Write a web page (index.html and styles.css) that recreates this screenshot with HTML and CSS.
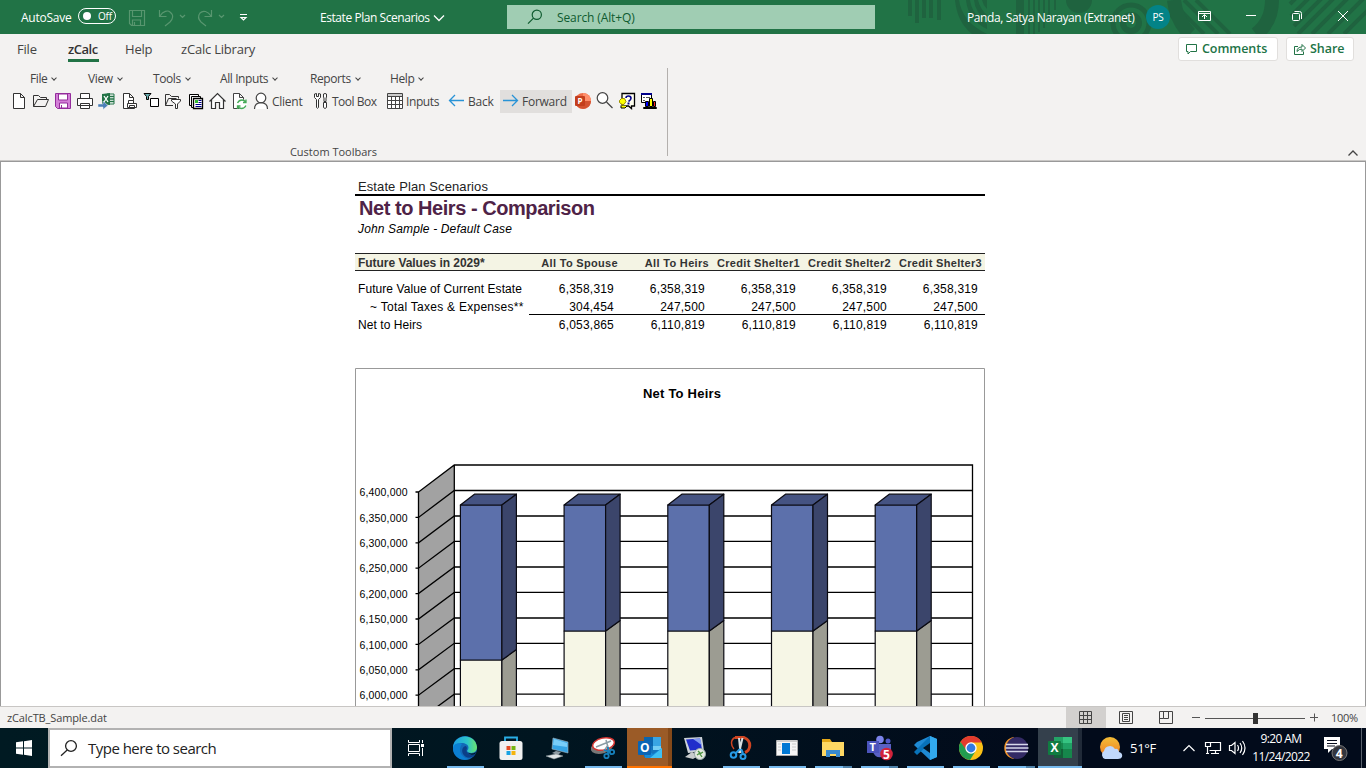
FILE: index.html
```html
<!DOCTYPE html>
<html lang="en">
<head>
<meta charset="utf-8">
<title>Estate Plan Scenarios</title>
<link rel="stylesheet" href="styles.css">
</head>
<body>
<div class="window">
  <header class="titlebar">
    <svg class="pattern" width="466" height="34" viewBox="900 0 466 34" fill="none" stroke="#1f633f">
      <g fill="#1f633f" stroke="none"><path d="M908 0h4v16h-4zM915 0h4v23h-4zM922 0h4v18h-4zM929 0h4v18h-4zM937 0h4v20h-4zM1066 0a12 12 0 0 0 26 0zM1120 23a11 11 0 1 0 22 0a11 11 0 1 0-22 0z"/><path d="M955 0h4q3 22 28 34h-15q-15-12-17-34zM966 0h4q2 15 17 24v5q-19-9-21-29zM974 0h4q2 9 9 15v5q-12-7-13-20zM982 0h5v9q-4-4-5-9zM1016 0h8v34h-8zM1028 0h2v34h-2zM1033 0h2v34h-2zM1038 0h2v32h-2zM1043 0h2v28h-2zM1048 0h2v20h-2zM1054 0h2v10h-2z"/></g>
      <circle cx="1131" cy="23" r="18" stroke-width="5"/><circle cx="1131" cy="23" r="5" fill="#217346" stroke="none"/>
      <path d="M1174 4l30 30M1184 0l34 34M1196 0l34 34M1170 14l20 20" stroke-width="4"/>
      <path d="M1174 0q2 20 16 34M1272 0q0 22-16 34" stroke-width="14"/>
      <path d="M1290 4l8-8M1291 16l20-20M1294 26l30-30M1298 34l36-36M1312 34l36-36M1328 34l36-36M1344 34l26-26" stroke-width="4"/>
    </svg>
    <span class="autosave">AutoSave</span>
    <span class="toggle"><i></i><b>Off</b></span>
    <svg class="quick" width="124" height="20" viewBox="128 7 124 20" fill="none" stroke="#58966f" stroke-width="1.2">
      <path d="M129.500 10.500h15v15h-13l-2-2zM132.500 10.500v6h9v-6M132.500 25v-5h8v5M134.500 22v3M159.500 10v6.500h7M160 16c3-5 8-6 10-4c4 3 3 7 0 10l-5 4M180 15l2.500 2.500 2.500-2.500M211.500 10v6.500h-7M211 16c-3-5-8-6-11-3c-3 4-1 7 1 9l5 4M219 15l2.500 2.500 2.500-2.500"/>
      <path d="M240 14.500h7M241 17.500l2.500 2.500 2.500-2.500z" stroke="#fff"/>
    </svg>
    <span class="doc">Estate Plan Scenarios</span>
    <svg class="doc-arrow" width="12" height="8" viewBox="0 0 12 8" fill="none" stroke="#fff" stroke-width="1.300"><path d="M1 1.500l5 5 5-5"/></svg>
    <div class="search">
      <svg width="16" height="16" viewBox="0 0 16 16" fill="none" stroke="#0f5b30" stroke-width="1.200"><circle cx="9.800" cy="5.800" r="4.600"/><path d="M6.500 9.200L1 14.700"/></svg>
      <span>Search (Alt+Q)</span>
    </div>
    <span class="user">Panda, Satya Narayan (Extranet)</span>
    <span class="avatar">PS</span>
    <svg class="winbtns" width="168" height="24" viewBox="1190 5 168 24" fill="none" stroke="#fff">
      <path d="M1198.500 11.500h12v9h-12zM1198.500 13.500h12M1204.500 19v-4M1202 17l2.500-2.500 2.500 2.500M1246 15.500h10M1294.500 11.500h5q2 0 2 2v5.500M1338 11l10 10M1348 11l-10 10"/><rect x="1292.500" y="13.500" width="7" height="7" rx="1"/>
    </svg>
  </header>

  <section class="ribbon">
    <nav class="tabs">
      <span class="t-file">File</span><span class="t-zcalc">zCalc</span><span class="t-help">Help</span><span class="t-lib">zCalc Library</span>
      <button class="comments"><svg width="12" height="12" viewBox="0 0 12 12" fill="none" stroke="#217346"><path d="M.5 1.500h10v7h-6l-2.500 2.500v-2.500h-1.500z"/></svg>Comments</button>
      <button class="share"><svg width="12" height="12" viewBox="0 0 12 12" fill="none" stroke="#217346"><path d="M4 3.500h-3.500v8h9v-3M3 8.500q0-4.500 5-4.500v-2.500l3.500 3.500-3.500 3.500v-2.500q-3 0-5 2.500z"/></svg>Share</button>
    </nav>
    <div class="group">
      <div class="menus">
        <span class="m1">File<i></i></span><span class="m2">View<i></i></span><span class="m3">Tools<i></i></span><span class="m4">All Inputs<i></i></span><span class="m5">Reports<i></i></span><span class="m6">Help<i></i></span>
      </div>
      <div class="tools">
        <svg class="ic" viewBox="0 0 22 22"><path d="M5.500 3.500h7l4 4v11h-11zM12.500 3.500v4h4" fill="#fff" stroke="#333"/></svg>
        <svg class="ic" viewBox="0 0 22 22" fill="none" stroke="#333"><path d="M3.500 16.500v-11h5l2 2h6v2M3.500 16.500l4-7h11l-3 7z"/></svg>
        <svg class="ic" viewBox="0 0 22 22"><path d="M3.500 3.500h15v15h-13l-2-2z" fill="#d37fd7" stroke="#942d9c"/><path d="M6.500 4h9v6h-9zM7.500 18v-5h8v5z" fill="#fff" stroke="#942d9c"/><path d="M9.500 15v3" stroke="#942d9c"/></svg>
        <svg class="ic" viewBox="0 0 22 22" fill="#fff" stroke="#333"><path d="M6.500 8V3.500h9V8M3.500 8.500h15v7h-15zM6.500 13.500h9v5h-9z"/></svg>
        <svg class="ic" viewBox="0 0 22 22"><path d="M11 4h7v10h-7z" fill="#fff" stroke="#217346"/><path d="M14 6.500h4M14 9h4M14 11.500h4" stroke="#217346" stroke-width="1.500"/><path d="M6 4l8-1v12l-8-1z" fill="#217346"/><path d="M8 6l4 6M12 6l-4 6" stroke="#fff" stroke-width="1.300"/><path d="M2 14h5v-3l5 4.500-5 4v-2.500h-5z" fill="#4b7fb8" stroke="#f3f1f0" stroke-width=".5"/></svg>
        <svg class="ic" viewBox="0 0 22 22" fill="#fff" stroke="#333"><path d="M5.500 3.500h6l4 4v11h-10zM11.500 3.500v4h4"/><path d="M10.500 13v-2.500h5V13M9.500 13.500h9v4h-9zM11.500 15.500h5v3h-5z"/></svg>
        <svg class="ic" viewBox="0 0 22 22"><path d="M4 3.500h7l-2.500 3v3h-2v-3z" fill="#69aeb0" stroke="#000"/><path d="M10.500 8.500h8v8h-8z" fill="#fff" stroke="#000"/></svg>
        <svg class="ic" viewBox="0 0 22 22" fill="none" stroke="#333"><path d="M11 15.500H3.500v-11h4l2 2h7v2M3.500 15.500l3-7h8"/><path d="M9.500 9.500h9v1.500l-3 3v4.500h-2V14l-4-3z" fill="#fff"/></svg>
        <svg class="ic" viewBox="0 0 22 22" fill="#fff" stroke="#000"><path d="M5.500 4.500h9v11h-9z"/><path d="M7.500 6.500h9v11h-9z"/><path d="M9.500 8.500h9v10h-9z" stroke-width="1.300"/><path d="M14.500 10.500h3M14.500 12.500h3M11.500 14.500h6M11.500 16.500h6" stroke="#00008b"/><path d="M11 10h3v3h-3z" fill="#3b3" stroke="none"/></svg>
        <svg class="ic" viewBox="0 0 22 22" fill="#fff" stroke="#333" stroke-width="1.200"><path d="M5.500 10v8.500h4v-6h4v6h4V10M3.500 11.500l8-8 8 8"/></svg>
        <svg class="ic" viewBox="0 0 22 22"><path d="M5.500 3.500h6l4 4v11h-10zM11.500 3.500v4h4" fill="#fff" stroke="#444"/><circle cx="14" cy="14.500" r="5" fill="#fff"/><path d="M9.500 13q1.500-3 4.500-3 2 0 4 2M18 9.500v3h-3M18 15.500q-1.500 3-4.500 3-2 0-4-2M9.500 19v-3h3" fill="none" stroke="#45a957" stroke-width="1.300"/></svg>
        <svg class="ic" viewBox="0 0 22 22" fill="#fff" stroke="#444" stroke-width="1.200"><circle cx="11" cy="8" r="4.800"/><path d="M4.500 19q0-6 6.500-6.300q6.500.3 6.500 6.300"/></svg><span class="l1">Client</span>
        <svg class="ic" viewBox="0 0 22 22" fill="#fff" stroke="#333"><path d="M4.500 4v3.500l2 2v8q1 1.500 2 0v-8l2-2V4l-2-.5v3h-2v-3zM13.500 4q1.500-1 3 0v3l-.5 1v3.500h-2V8l-.5-1zM13.500 12.500h3v5q-1.500 2-3 0z"/></svg><span class="l2">Tool Box</span>
        <svg class="ic" viewBox="0 0 22 22" stroke="#444"><path d="M3.500 3.500h15v15h-15z" fill="#fff"/><path d="M4 4h14v2.500H4z" fill="#ccc" stroke="none"/><path d="M3.500 6.500h15M3.500 10.500h15M3.500 14.500h15M7.500 6.500v12M11.500 6.500v12M15.500 6.500v12"/></svg><span class="l3">Inputs</span>
        <svg class="ic" viewBox="0 0 22 22" fill="none" stroke="#2893d6" stroke-width="1.300"><path d="M19 10.500H4.500M10 5l-5.500 5.500L10 16"/></svg><span class="l4">Back</span>
        <span class="forward"><svg class="ic" viewBox="0 0 22 22" fill="none" stroke="#2893d6" stroke-width="1.300"><path d="M3 10.500h14.500M12 5l5.500 5.500L12 16"/></svg><span>Forward</span></span>
        <svg class="ic" viewBox="0 0 22 22"><circle cx="11" cy="11" r="8" fill="#ed6c47"/><path d="M11 3a8 8 0 0 1 8 8h-8z" fill="#ff8f6b"/><path d="M19 11a8 8 0 0 1-14 5l6-5z" fill="#d35230"/><rect x="3" y="6" width="10" height="10" rx="1" fill="#c43e1c"/><text x="5.500" y="14" class="logo" font-size="8">P</text></svg>
        <svg class="ic" viewBox="0 0 22 22" fill="#fff" stroke="#444" stroke-width="1.200"><circle cx="8.500" cy="8" r="5.300"/><path d="M12.500 12l6 6"/></svg>
        <svg class="ic" viewBox="0 0 22 22"><path d="M6 3.500h12.500V16h-3v2.500l-3-2.500H6z" fill="#fffff0" stroke="#000" stroke-width="1.300"/><path d="M3.500 10.500l2-2h3l1.500 3-2 3H6l-2.500-2z" fill="#ff0" stroke="#998c00"/><path d="M10 8q0-2 2.500-2T15 8.300q0 1.700-2.500 3.200" stroke="#00008b" stroke-width="1.600" fill="none"/><path d="M11.500 12.500h2v2h-2z" fill="#00008b"/><path d="M5 15.500v2.500h4l2-2" fill="#ff0" stroke="#000"/></svg>
        <svg class="ic" viewBox="0 0 22 22"><path d="M3.500 3.500h10v9h-10z" fill="#fff" stroke="#000"/><path d="M3 3h11v2H3z" fill="#00008b"/><path d="M5 7.500h2M8 7.500h4M5 10.500h2" stroke="#555"/><path d="M5.500 17.500h13v1h-13z" fill="#fff" stroke="#000"/><path d="M7.500 11.500h3v5h-3z" fill="#00f" stroke="#000"/><path d="M11.500 8.500h3v8h-3z" fill="#ff0" stroke="#000"/><path d="M15.500 11.500h2v5h-2z" fill="#f22" stroke="#000"/></svg>
      </div>
      <div class="group-name">Custom Toolbars</div>
    </div>
    <svg class="collapse" width="12" height="8" viewBox="0 0 12 8" fill="none" stroke="#444" stroke-width="1.300"><path d="M1.500 6.500L6 2l4.500 4.500"/></svg>
  </section>

  <main class="sheet">
    <article class="report">
      <div class="kicker">Estate Plan Scenarios</div>
      <h1>Net to Heirs - Comparison</h1>
      <div class="case">John Sample - Default Case</div>
      <div class="row head"><b>Future Values in 2029*</b><b>All To Spouse</b><b>All To Heirs</b><b>Credit Shelter1</b><b>Credit Shelter2</b><b>Credit Shelter3</b></div>
      <div class="row first"><span>Future Value of Current Estate</span><span>6,358,319</span><span>6,358,319</span><span>6,358,319</span><span>6,358,319</span><span>6,358,319</span></div>
      <div class="row minus"><span>~ Total Taxes &amp; Expenses**</span><span>304,454</span><span>247,500</span><span>247,500</span><span>247,500</span><span>247,500</span></div>
      <div class="row net"><span>Net to Heirs</span><span>6,053,865</span><span>6,110,819</span><span>6,110,819</span><span>6,110,819</span><span>6,110,819</span></div>
      <svg class="chart" width="630" height="338" viewBox="355 368 630 338">
        <defs>
          <g id="bar"><path d="M0 631h41.500v90H0z" fill="#f6f6e6"/><path d="M41.500 631l14.500-10.500v100H41.500z" fill="#9c9c92"/><path d="M0 505h41.500v126H0z" fill="#5c70ab"/><path d="M0 505l14-10.800h42L41.500 505z" fill="#455382"/><path d="M41.500 505L56 494.200v126.300L41.500 631z" fill="#3b456b"/></g>
        </defs>
        <path d="M355.500 720V368.500h629V720" fill="#fff" stroke="#999"/>
        <text x="682" y="398" text-anchor="middle" class="chart-title" textLength="78">Net To Heirs</text>
        <path d="M418.500 492L454 465v260h-35.500z" fill="#a2a2a2"/>
        <g stroke="#000" stroke-width="1.300" fill="none">
          <path d="M418.500 720V492L454.300 465H972.500V720M454.300 465V720"/>
          <path d="M415.500 492h3M415.500 517.400h3L454.300 490.500H972.500M415.500 542.800h3L454.300 516H972.500M415.500 568.200h3L454.300 541.400H972.500M415.500 593.600h3L454.300 567H972.500M415.500 619h3L454.300 592.400H972.500M415.500 644.400h3L454.300 618H972.500M415.500 669.800h3L454.300 643.300H972.500M415.500 695.200h3L454.300 668.700H972.500M418.500 720.500L454.300 694.200H972.500"/>
        </g>
        <g class="axis"><text x="359.500" y="496" textLength="48">6,400,000</text><text x="359.500" y="522" textLength="48">6,350,000</text><text x="359.500" y="547" textLength="48">6,300,000</text><text x="359.500" y="572" textLength="48">6,250,000</text><text x="359.500" y="598" textLength="48">6,200,000</text><text x="359.500" y="623" textLength="48">6,150,000</text><text x="359.500" y="649" textLength="48">6,100,000</text><text x="359.500" y="674" textLength="48">6,050,000</text><text x="359.500" y="699" textLength="48">6,000,000</text></g>
        <g stroke="#0a0a12" stroke-width="1.200" stroke-linejoin="round">
          <g transform="translate(460.400 0)"><path d="M0 660h41.500v61H0z" fill="#f6f6e6"/><path d="M41.500 660L56 649.500V721H41.500z" fill="#9c9c92"/><path d="M0 505h41.500v155H0z" fill="#5c70ab"/><path d="M0 505l14-10.800h42L41.500 505z" fill="#455382"/><path d="M41.500 505L56 494.200v155.300L41.500 660z" fill="#3b456b"/></g>
          <use href="#bar" x="564.100"/><use href="#bar" x="667.800"/><use href="#bar" x="771.500"/><use href="#bar" x="875.200"/>
        </g>
      </svg>
    </article>
  </main>

  <div class="status">
    <span class="file">zCalcTB_Sample.dat</span>
    <span class="view on"><svg width="14" height="14" fill="none" stroke="#444"><path d="M.5.5h12v12H.5zM.5 4.500h12M.5 8.500h12M4.500.5v12M8.500.5v12"/></svg></span>
    <span class="view"><svg width="14" height="14" fill="none" stroke="#444"><path d="M.5.5h13v12H.5zM3.500 2.500h7v8h-7zM5 4.500h4M5 6.500h4M5 8.500h4"/></svg></span>
    <span class="view"><svg width="14" height="14" fill="none" stroke="#444"><path d="M.5.5h13v12H.5zM4.500.5v7h-4M9.500.5v7h-5"/></svg></span>
    <svg class="zoombar" width="130" height="14" viewBox="0 0 130 14" stroke="#555"><path d="M2 6.500h8M15 7.500h100M120 6.500h8M124.500 2.500v8"/><path d="M63 2h5v11h-5z" fill="#333" stroke="none"/></svg>
    <span class="pct">100%</span>
  </div>

  <footer class="taskbar">
    <span class="start"><svg width="16" height="16" fill="#fff"><path d="M0 2.300l7-1v6.200H0zM8 1.200L16 0v7.500H8zM0 8.500h7v6.200l-7-1zM8 8.500h8V16l-8-1.200z"/></svg></span>
    <div class="tsearch"><svg width="18" height="18" viewBox="0 0 18 18" fill="none" stroke="#222" stroke-width="1.300"><circle cx="11" cy="7" r="5.400"/><path d="M7.200 11L1 16.800"/></svg><span>Type here to search</span></div>
    <span class="taskview"><svg width="18" height="16" fill="none" stroke="#fff"><path d="M1.500 0v2.500h11V0M1.500 4.500h11v7h-11zM1.500 16v-2.500h11V16M15.500 0v3M15.500 8v8"/><path d="M14 4h3v3h-3z" fill="#fff" stroke="none"/></svg></span>
    <span class="app run"><svg width="24" height="24" viewBox="0 0 24 24"><defs><linearGradient id="e1" x2="1"><stop stop-color="#1b9de2"/><stop offset=".6" stop-color="#2dc5c9"/><stop offset="1" stop-color="#6be36c"/></linearGradient></defs><circle cx="12" cy="12" r="12" fill="#1269b8"/><path d="M0 12C0-2 22-4 24 11c0 7-8 7-10 4c4-5-1-8-5-8c-5 0-9 4-9 9z" fill="url(#e1)"/><path d="M9 8c-5 7 0 14 7 15-8 3-16-3-16-10 0-5 5-7 9-5z" fill="#0b7fd2"/><path d="M14 12c-2 5 3 9 9 5-3 6-10 6-13 1-2-4 0-8 3-8z" fill="#0b3f88"/><path d="M14 16q4 3 9 0l-.500 1.500q-5 3-8.500-1.500z" fill="#001520"/></svg></span>
    <span class="app"><svg width="24" height="24" viewBox="0 0 24 24"><path d="M6 6V1.500h12V6" fill="none" stroke="#29aee6" stroke-width="1.800"/><rect x=".5" y="5" width="23" height="19" rx="2.500" fill="#f1f1f1"/><path d="M7.500 10h4v4h-4z" fill="#e44c25"/><path d="M12.500 10h4v4h-4z" fill="#75b512"/><path d="M7.500 15h4v4h-4z" fill="#18a2e3"/><path d="M12.500 15h4v4h-4z" fill="#f5b40e"/></svg></span>
    <span class="app"><svg width="24" height="24" viewBox="0 0 24 24"><path d="M8 2l15 4v11L7 13z" fill="#35a4e5" stroke="#a8bdc9" stroke-width=".6"/><path d="M9 3l13 4v4L8 9z" fill="#78cefa"/><path d="M11 15l5 1-3 3-6-2z" fill="#8f9ca3"/><path d="M1 20l10-2 7 2-9 3z" fill="#dfe4e5" stroke="#8f9a9e" stroke-width=".5"/></svg></span>
    <span class="app run"><svg width="24" height="24" viewBox="0 0 24 24"><ellipse cx="11" cy="11" rx="11.500" ry="6.500" transform="rotate(-15 11 11)" fill="#777"/><ellipse cx="12.500" cy="8" rx="11" ry="6" transform="rotate(-12 12.500 8)" fill="#fff" stroke="#d43532" stroke-width="1.500"/><path d="M5 11l15-6M15 4l3 11M17 9l-4 6" stroke="#8b9ca5" stroke-width="1.500"/><g fill="none" stroke="#1680bc" stroke-width="1.800"><circle cx="15.500" cy="20" r="2.200"/><circle cx="21" cy="16" r="2.200"/><path d="M13 14l6 2M17 11v7"/></g></svg></span>
    <span class="app outlook"><svg width="24" height="24" viewBox="0 0 24 24"><path d="M6 1h17v20H6z" fill="#1475bd"/><path d="M6 1h9v9H6z" fill="#0b65ae"/><path d="M15 1h8v9h-8z" fill="#38a5e4"/><path d="M15 10h8v4h-8z" fill="#74cef5"/><path d="M7 13l8 5 9-6v10H7z" fill="#168bd8"/><path d="M24 12L12 22h12z" fill="#3fc0f2"/><rect y="5" width="13" height="14" rx="1" fill="#0b65b5"/><text x="2" y="16" class="logo" font-size="12">O</text></svg></span>
    <span class="app"><svg width="24" height="24" viewBox="0 0 24 24"><path d="M1 2l18-1 2 14-16 2z" fill="#ccd3d8"/><path d="M3 3.500l14-1 2 11-12 1z" fill="#202ecb"/><path d="M10 3l7-.500 2 7q-5-4-9-6.500z" fill="#809aef"/><path d="M9 16l6 4-5 3-8-2z" fill="#c7cbcc"/><circle cx="17" cy="18" r="5.500" fill="#e4e9df" stroke="#9aa"/><path d="M14 19l3-2-2-2M20 16l-3 2 2 3" fill="none" stroke="#4a923e" stroke-width="1.300"/></svg></span>
    <span class="app run"><svg width="24" height="24" viewBox="0 0 24 24"><path d="M6 1.500h9c9 4 6 13 1 15" fill="none" stroke="#cf4522" stroke-width="3"/><path d="M6 1.500C1 4 2 10 5 13" fill="none" stroke="#cf4522" stroke-width="1.500"/><path d="M10 2l1.500 15M13.500 2L10 17" stroke="#d7dee1" stroke-width="2"/><g fill="none" stroke="#279be6" stroke-width="2"><path d="M11 13l-4 4M12 13l2 4"/><circle cx="4.500" cy="19" r="2.800"/><circle cx="14" cy="20.500" r="2.500"/></g></svg></span>
    <span class="app run"><svg width="24" height="24" viewBox="0 0 24 24"><path d="M1.500 4.500h21v15h-21z" fill="#f6f6f6" stroke="#aaa"/><path d="M2 4h20v2H2z" fill="#ccc"/><path d="M7 7h8v11H7z" fill="#0078d4"/><path d="M3 8h3M3 11h3M3 14h3M17 8h4M17 11h4M17 14h4" stroke="#ccc"/></svg></span>
    <span class="app run multi"><svg width="24" height="24" viewBox="0 0 24 24"><path d="M1 3h8l2 3h12v14H1z" fill="#e5a817"/><path d="M1 6h22v14H1z" fill="#ffd863"/><path d="M5 21v-7h14v7h-4v-3H9v3z" fill="#398ace"/></svg></span>
    <span class="app run multi"><svg width="28" height="26" viewBox="0 0 28 26"><circle cx="15" cy="4.500" r="3.800" fill="#7b83eb"/><circle cx="23" cy="6" r="2.500" fill="#5059c9"/><path d="M9 9h17v7q-1 5-6 5-9 4-12-4z" fill="#5a61c5"/><path d="M2 6h12v12H2z" fill="#4b53bc"/><text x="4.500" y="16" class="logo" font-size="11">T</text><circle cx="21.500" cy="19" r="6.300" fill="#d1233b"/><text x="18" y="23.500" class="logo" font-size="12">5</text></svg></span>
    <span class="app run"><svg width="24" height="24" viewBox="0 0 24 24"><path d="M17 0l7 3v18l-7 3L1 9l3-3z" fill="#1f8ad4"/><path d="M1 16L17 0v7L4 19z" fill="#0872b9"/><path d="M17 0l7 3v18l-7 3z" fill="#32a9ed"/><path d="M17 7v10l-7-5z" fill="#001322"/></svg></span>
    <span class="app run c45"><svg width="24" height="24" viewBox="0 0 24 24"><circle cx="12" cy="12" r="12" fill="#fbc116"/><path d="M12 12V6.500h10.700A12 12 0 0 0 1.600 6l5.400 9z" fill="#e33b2e"/><path d="M1.600 6A12 12 0 0 0 11 24l5-8-8-1z" fill="#229c4f"/><circle cx="12" cy="12" r="5.700" fill="#fff"/><circle cx="12" cy="12" r="4.400" fill="#347ae2"/></svg></span>
    <span class="app run multi c45"><svg width="26" height="24" viewBox="0 0 26 24"><path d="M11 1C-2 3-2 21 11 23q-7-11 0-22z" fill="#ef9429"/><circle cx="14" cy="12" r="11" fill="#332a65"/><path d="M3 8.500h22M2.500 12h23M3 15.500h22" stroke="#d7d8eb" stroke-width="1.700"/></svg></span>
    <span class="app excel"><svg width="24" height="24" viewBox="0 0 24 24"><path d="M6 1h18v21H6z" fill="#16864b"/><path d="M15 1h9v6h-9z" fill="#36c481"/><path d="M6 1h9v6H6z" fill="#23a366"/><path d="M15 7h9v6h-9z" fill="#20a164"/><path d="M6 13h9v9H6z" fill="#135f38"/><rect y="5" width="13" height="14" rx="1" fill="#107c41"/><text x="2.500" y="16" class="logo" font-size="12">X</text></svg></span>
    <svg class="weather" width="24" height="24" viewBox="0 0 24 24"><defs><linearGradient id="sun" y2="1" x2="0"><stop stop-color="#f4be36"/><stop offset="1" stop-color="#ee7922"/></linearGradient></defs><circle cx="11" cy="11" r="10" fill="url(#sun)"/><path d="M6 23a4.500 4.500 0 0 1-1-8 6 6 0 0 1 11-2q3-1 4 3 4 1 3 5-1 2-4 2z" fill="#c1d8fb"/></svg>
    <span class="temp">51°F</span>
    <svg class="tray" width="64" height="18" viewBox="1182 739 64 18" fill="none" stroke="#fff" stroke-width="1.200"><path d="M1183.500 751l5.500-5.500 5.500 5.500M1209.500 742.500h11v8h-11M1215.500 750.500v3M1211 753.500h8M1205.500 742.500h5v4h-5zM1207.500 747v6M1206 753.500h3M1229.500 745.500h2l3.500-3v11l-3.500-3h-2zM1237.500 745q2 3 0 6M1240 743q3.500 5 0 10M1242.500 741q5 7 0 14"/></svg>
    <div class="clock"><span>9:20 AM</span><span>11/24/2022</span></div>
    <svg class="notice" width="26" height="26" viewBox="0 0 26 26"><path d="M1 1h16v12H9l-4 4v-4H1z" fill="#fff"/><path d="M4 4.500h10M4 7.500h10M4 10h8" stroke="#0a1020" stroke-width="1.200"/><circle cx="16.500" cy="17" r="7.500" fill="#34363e" stroke="#777"/><text x="12.800" y="21.500" class="logo" font-size="12">4</text></svg>
    <span class="peek"></span>
  </footer>
</div>
</body>
</html>
```
FILE: styles.css
```css
* { box-sizing: border-box; }
body { margin: 0; font: 12px "Open Sans", "Noto Sans", sans-serif; color: #444; background: #fff; overflow: hidden; }
.window { width: 1366px; height: 768px; display: flex; flex-direction: column; white-space: nowrap; }
svg { display: block; flex: none; }
.logo { font-family: "Open Sans", sans-serif; font-weight: 700; fill: #fff; stroke: none; }

.titlebar { position: relative; height: 34px; background: #217346; color: #fff; display: flex; align-items: center; flex: none; letter-spacing: -.25px; }
.pattern { position: absolute; right: 0; top: 0; }
.titlebar > :not(.pattern) { position: relative; flex: none; }
.autosave { margin-left: 21px; width: 57px; }
.toggle { width: 38px; height: 16px; border: 1px solid #fff; border-radius: 8px; display: flex; align-items: center; margin-top: -2px; }
.toggle i { width: 8px; height: 8px; background: #fff; border-radius: 50%; margin: 0 7px 0 4px; }
.toggle b { font-weight: 400; font-size: 10px; }
.quick { margin-left: 12px; }
.doc { margin-left: 68px; width: 113px; letter-spacing: -.44px; }
.doc-arrow { margin-top: 1px; }
.search { margin-left: 62px; width: 368px; height: 24px; background: #a0cdb3; color: #0f5b30; display: flex; align-items: center; }
.search svg { margin-left: 20px; }
.search span { margin-left: 14px; letter-spacing: -.12px; }
.user { margin-left: 92px; width: 179px; letter-spacing: -.39px; }
.avatar { width: 24px; height: 24px; border-radius: 50%; background: #038387; font-size: 10px; line-height: 24px; text-align: center; }
.winbtns { margin-left: 20px; }

.ribbon { height: 127px; background: #f3f2f1; position: relative; flex: none; border-bottom: 1px solid #c8c6c4; }
.tabs { display: flex; height: 32px; font-size: 13px; align-items: flex-start; line-height: 18px; padding: 6px 0 0 17px; letter-spacing: -.2px; }
.t-file { width: 51px; }
.t-zcalc { width: 31px; margin-right: 26px; height: 22px; border-bottom: 3px solid #217346; font-weight: 600; letter-spacing: -.5px; color: #333; }
.t-help { width: 56px; }
.t-lib { width: 150px; }
.tabs button { font: 600 12.5px/18px "Open Sans", sans-serif; letter-spacing: -.05px; color: #217346; background: #fff; border: 1px solid #e1dfdd; border-radius: 3px; height: 24px; margin-top: -3px; padding: 0 0 0 7px; display: flex; align-items: center; gap: 4px; }
.comments { width: 100px; margin-left: auto; }
.share { width: 68px; margin: 0 12px 0 8px; }
.group { width: 668px; height: 88px; margin-top: 2px; border-right: 1px solid #b3b0ad; letter-spacing: -.25px; }
.menus { display: flex; height: 22px; line-height: 21px; padding-left: 30px; letter-spacing: -.4px; }
.menus i { display: inline-block; width: 4px; height: 4px; border: solid #444; border-width: 0 1px 1px 0; transform: rotate(45deg); margin: 0 0 3px 5px; }
.m1 { width: 58px; } .m2 { width: 65px; } .m3 { width: 67px; } .m4 { width: 90px; } .m5 { width: 80px; }
.tools { display: flex; height: 23px; align-items: flex-start; padding-left: 8px; line-height: 23px; }
.ic { width: 22px; height: 22px; }
.l1 { width: 38px; } .l2 { width: 52px; letter-spacing: -.5px; } .l3 { width: 39px; letter-spacing: -.4px; } .l4 { width: 33px; padding-left: 1px; }
.forward { display: flex; width: 72px; height: 23px; background: #e1dfdd; }
.group-name { margin-top: 31px; line-height: 16px; font-size: 11px; text-align: center; letter-spacing: 0; }
.collapse { position: absolute; right: 7px; bottom: 3px; }

.sheet { height: 545px; flex: none; overflow: hidden; background: #fff; border: 1px solid #999; border-bottom: 0; padding-left: 354px; font-family: "Liberation Sans", Arial, sans-serif; color: #000; }
.report { width: 630px; padding-top: 15px; }
.kicker { height: 19px; line-height: 19px; padding-left: 3px; font-size: 13px; color: #222; border-bottom: 2px solid #000; letter-spacing: .1px; }
h1 { margin: 0; height: 25px; line-height: 25px; padding-left: 4px; font-size: 20px; color: #4f2347; letter-spacing: -.45px; }
.case { height: 18px; line-height: 17px; padding-left: 3px; font-style: italic; font-size: 12px; letter-spacing: .15px; }
.row { display: grid; grid-template-columns: 174px 91px 91px 91px 91px 92px; height: 18px; line-height: 18px; font-size: 12px; }
.row > :not(:first-child) { text-align: right; padding-right: 6px; letter-spacing: .2px; }
.row > :last-child:not(:first-child) { padding-right: 7px; }
.row > :first-child { padding-left: 3px; letter-spacing: .07px; }
.head { margin-top: 14px; background: #f4f4e4; border: solid #222; border-width: 1px 0; color: #333; line-height: 18px; }
.head > :first-child { letter-spacing: -.04px; }
.head > :not(:first-child) { padding-right: 2px; font-size: 11px; letter-spacing: .32px; }
.head > :last-child:not(:first-child) { padding-right: 3px; }
.first { margin-top: 9px; }
.minus > :first-child { padding-left: 15px; letter-spacing: .27px; }
.minus > :not(:first-child) { box-shadow: inset 0 1px #fff0, 0 -1px #000 inset; height: 17px; }
.chart { margin-top: 34px; }
.chart-title { font: bold 13px "Liberation Sans", sans-serif; }
.axis { font: 10.5px "Liberation Sans", sans-serif; fill: #000; }

.status { height: 22px; background: #f3f2f1; border-top: 1px solid #c8c6c4; flex: none; display: flex; align-items: center; font-size: 11px; padding-left: 7px; }
.file { width: 1059px; letter-spacing: -.12px; }
.view { width: 40px; height: 21px; display: grid; place-items: center; }
.view.on { background: #d2d0ce; }
.zoombar { margin-left: 4px; }
.pct { margin-left: 11px; letter-spacing: -.25px; }

.taskbar { height: 40px; flex: none; display: flex; align-items: center; background: linear-gradient(90deg, #001a22, #001520 40%, #020b1b 75%); color: #fff; }
.taskbar > * { flex: none; }
.start { width: 48px; display: grid; place-items: center; }
.tsearch { width: 344px; height: 40px; border: 2px solid #b2b2b2; background: #fff; color: #222; display: flex; align-items: center; font-size: 15px; letter-spacing: -.52px; }
.tsearch svg { margin-left: 10px; }
.tsearch span { margin-left: 10px; }
.taskview { width: 50px; padding-left: 15px; }
.app { width: 46px; height: 40px; display: grid; place-items: center; position: relative; }
.c45 { width: 45px; }
.run::after { content: ""; position: absolute; bottom: 0; left: 5px; width: 37px; height: 2px; background: #76b9ed; }
.multi::after { background: linear-gradient(90deg, #76b9ed 28px, #4f82aa 28px); }
.outlook { background: linear-gradient(90deg, #9b5b27 41px, #844919 41px); box-shadow: inset 0 -2px #ff7300; width: 45px; margin-left: 1px; }
.excel { width: 44px; background: linear-gradient(90deg, #34404c 40px, #202a38 40px); box-shadow: inset 0 -2px #76b9ed; }
.weather { margin-left: 17px; }
.temp { width: 59px; padding-left: 7px; font-size: 13px; letter-spacing: -.3px; }
.clock { width: 76px; display: flex; flex-direction: column; text-align: center; line-height: 18px; letter-spacing: -.6px; }
.notice { margin-left: 4px; margin-top: 2px; }
.tray { margin-right: -3px; }
.peek { width: 1px; height: 40px; background: #59616c; margin-left: auto; margin-right: 4px; }
```
